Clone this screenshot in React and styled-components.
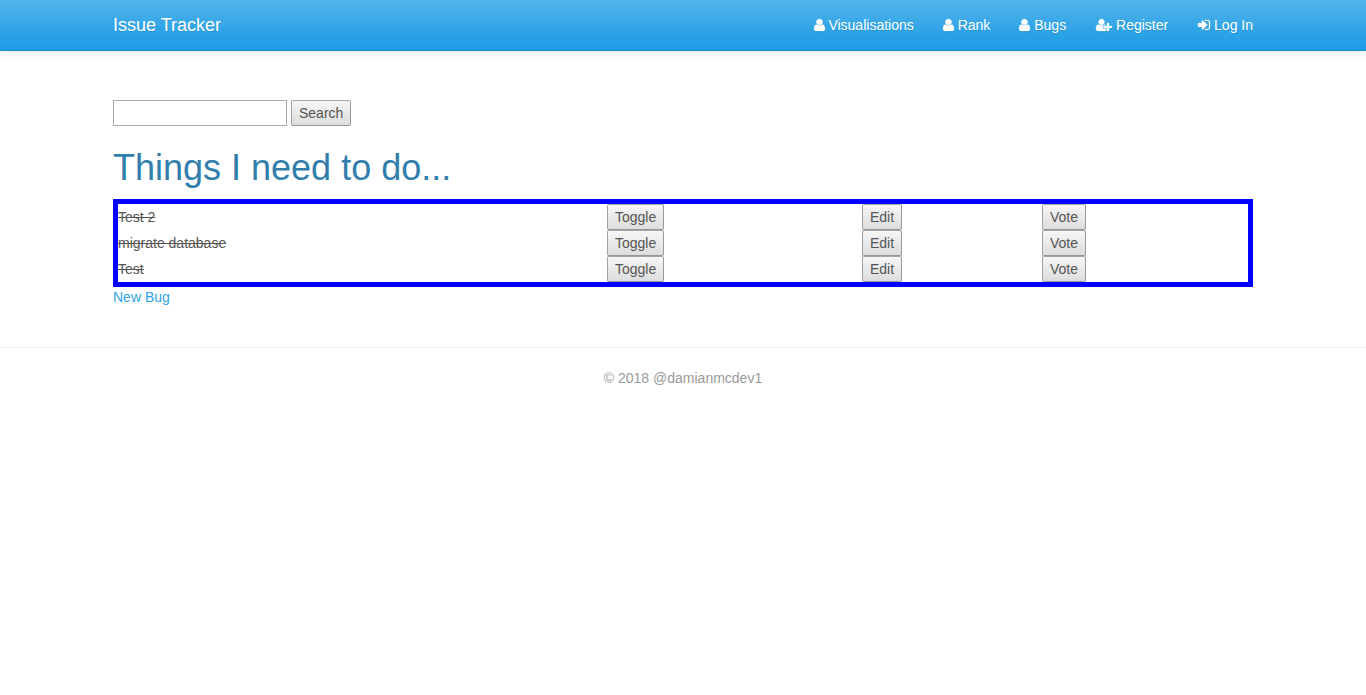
import React from "react";
import styled, { createGlobalStyle } from "styled-components";

const GlobalStyle = createGlobalStyle`
  *, *::before, *::after { box-sizing: border-box; }
  body {
    margin: 0;
    background: #fff;
    color: #555;
    font-family: "Liberation Sans", Arial, sans-serif;
    font-size: 14px;
    line-height: 20px;
  }
`;

const Container = styled.div`
  width: 1170px;
  margin: 0 auto;
  padding: 0 15px;
`;

const Navbar = styled.header`
  height: 51px;
  background: linear-gradient(#54b4eb, #2fa4e7 60%, #1d9ce5);
  border-bottom: 1px solid #178acc;
  box-shadow: 0 1px 10px rgba(0, 0, 0, 0.1);
`;

const NavInner = styled(Container)`
  display: flex;
  justify-content: space-between;
`;

const Brand = styled.a`
  padding: 15px 0;
  color: #fff;
  font-size: 18px;
  text-shadow: 0 1px 0 rgba(0, 0, 0, 0.1);
`;

const NavList = styled.nav`
  display: flex;
  gap: 30px;
`;

const NavLink = styled.a`
  padding: 15px 0;
  color: #fff;
  white-space: nowrap;
  text-shadow: 0 1px 0 rgba(0, 0, 0, 0.1);
`;

const Glyph = styled.svg`
  display: inline-block;
  width: ${(p) => p.$width}px;
  height: 14px;
  margin-left: ${(p) => p.$bleed * -1}px;
  vertical-align: -2px;
  overflow: visible;
  fill: currentColor;
  stroke: currentColor;
  stroke-width: ${(p) => p.$weight};
  filter: drop-shadow(0 1px 0 rgba(0, 0, 0, 0.1));
`;

const Main = styled(Container).attrs({ as: "main" })`
  padding-top: 49px;
`;

const SearchForm = styled.form`
  display: flex;
  gap: 4px;
`;

const SearchInput = styled.input`
  width: 174px;
  height: 26px;
  padding: 1px 2px;
  border: 1px solid #a9a9a9;
  border-radius: 0;
  background: #fff;
  font: inherit;
  outline: none;
`;

const Button = styled.button`
  display: block;
  height: 26px;
  padding: 0 7px;
  border: 1px solid;
  border-color: #a6a6a6 #999 #959595 #a0a0a0;
  border-radius: 2px;
  background: linear-gradient(#f6f6f6, #dddddd);
  color: #555;
  font: inherit;
  line-height: 24px;
  white-space: nowrap;
`;

const Title = styled.h1`
  margin: 22px 0 11px;
  color: #317eac;
  font-size: 36px;
  font-weight: 400;
  line-height: 40px;
`;

const BugList = styled.section`
  border: 5px solid #00f;
`;

const BugRow = styled.div`
  display: grid;
  grid-template-columns: 489px 255px 180px 1fr;
  align-items: center;
  justify-items: start;
  height: 26px;
`;

const BugName = styled.span`
  text-decoration: line-through;
`;

const NewBug = styled.a`
  display: block;
  width: max-content;
  color: #2fa4e7;
`;

const Footer = styled.footer`
  margin-top: 40px;
  padding-top: 20px;
  border-top: 1px solid #eee;
  color: #999;
  text-align: center;
`;

const icons = {
  user: {
    units: 1280,
    width: 11,
    bleed: 1,
    weight: 24,
    d: "M1280 1399q0 109-62.5 187t-150.5 78h-854q-88 0-150.5-78t-62.5-187q0-85 8.5-160.5t31.5-152 58.5-131 94-89 134.5-34.5q131 128 313 128t313-128q76 0 134.5 34.5t94 89 58.5 131 31.5 152 8.5 160.5zm-256-887q0 159-112.5 271.5t-271.5 112.5-271.5-112.5-112.5-271.5 112.5-271.5 271.5-112.5 271.5 112.5 112.5 271.5z",
  },
  userPlus: {
    units: 2048,
    width: 16,
    bleed: 0,
    weight: 36,
    d: "M704 896q-159 0-271.5-112.5t-112.5-271.5 112.5-271.5 271.5-112.5 271.5 112.5 112.5 271.5-112.5 271.5-271.5 112.5zm960 128h352q13 0 22.5 9.5t9.5 22.5v192q0 13-9.5 22.5t-22.5 9.5h-352v352q0 13-9.5 22.5t-22.5 9.5h-192q-13 0-22.5-9.5t-9.5-22.5v-352h-352q-13 0-22.5-9.5t-9.5-22.5v-192q0-13 9.5-22.5t22.5-9.5h352v-352q0-13 9.5-22.5t22.5-9.5h192q13 0 22.5 9.5t9.5 22.5v352zm-736 224q0 52 38 90t90 38h256v238q-68 50-171 50h-874q-121 0-194-69t-73-190q0-53 3.5-103.5t14-109 26.5-108.5 43-97.5 62-81 85.5-53.5 111.5-20q19 0 39 17 79 61 154.5 91.5t164.5 30.5 164.5-30.5 154.5-91.5q20-17 39-17 132 0 217 96h-223q-52 0-90 38t-38 90v192z",
  },
  signIn: {
    units: 1536,
    width: 12,
    bleed: 0,
    weight: 40,
    d: "M1184 896q0 26-19 45l-544 544q-19 19-45 19t-45-19-19-45v-288h-448q-26 0-45-19t-19-45v-384q0-26 19-45t45-19h448v-288q0-26 19-45t45-19 45 19l544 544q19 19 19 45zm352-352v704q0 119-84.5 203.5t-203.5 84.5h-320q-13 0-22.5-9.5t-9.5-22.5q0-4-1-20t-.5-26.5 3-23.5 10-19.5 20.5-6.5h320q66 0 113-47t47-113v-704q0-66-47-113t-113-47h-312l-11.5-1-11.5-3-8-5.5-7-9-2-13.5q0-4-1-20t-.5-26.5 3-23.5 10-19.5 20.5-6.5h320q119 0 203.5 84.5t84.5 203.5z",
  },
};

function Icon({ name }) {
  const { units, width, bleed, weight, d } = icons[name];
  return (
    <Glyph
      $width={width}
      $bleed={bleed}
      $weight={weight}
      viewBox={`0 0 ${units} 1792`}
      preserveAspectRatio="none"
      aria-hidden="true"
    >
      <path d={d} />
    </Glyph>
  );
}

const links = [
  ["user", "Visualisations"],
  ["user", "Rank"],
  ["user", "Bugs"],
  ["userPlus", "Register"],
  ["signIn", "Log In"],
];

const bugs = ["Test 2", "migrate database", "Test"];

export default function App() {
  return (
    <>
      <GlobalStyle />
      <Navbar>
        <NavInner>
          <Brand>Issue Tracker</Brand>
          <NavList>
            {links.map(([icon, label]) => (
              <NavLink key={label}>
                <Icon name={icon} /> {label}
              </NavLink>
            ))}
          </NavList>
        </NavInner>
      </Navbar>
      <Main>
        <SearchForm>
          <SearchInput type="text" aria-label="Search bugs" />
          <Button type="button">Search</Button>
        </SearchForm>
        <Title>Things I need to do...</Title>
        <BugList>
          {bugs.map((bug) => (
            <BugRow key={bug}>
              <BugName>{bug}</BugName>
              <Button type="button">Toggle</Button>
              <Button type="button">Edit</Button>
              <Button type="button">Vote</Button>
            </BugRow>
          ))}
        </BugList>
        <NewBug>New Bug</NewBug>
      </Main>
      <Footer>© 2018 @damianmcdev1</Footer>
    </>
  );
}
